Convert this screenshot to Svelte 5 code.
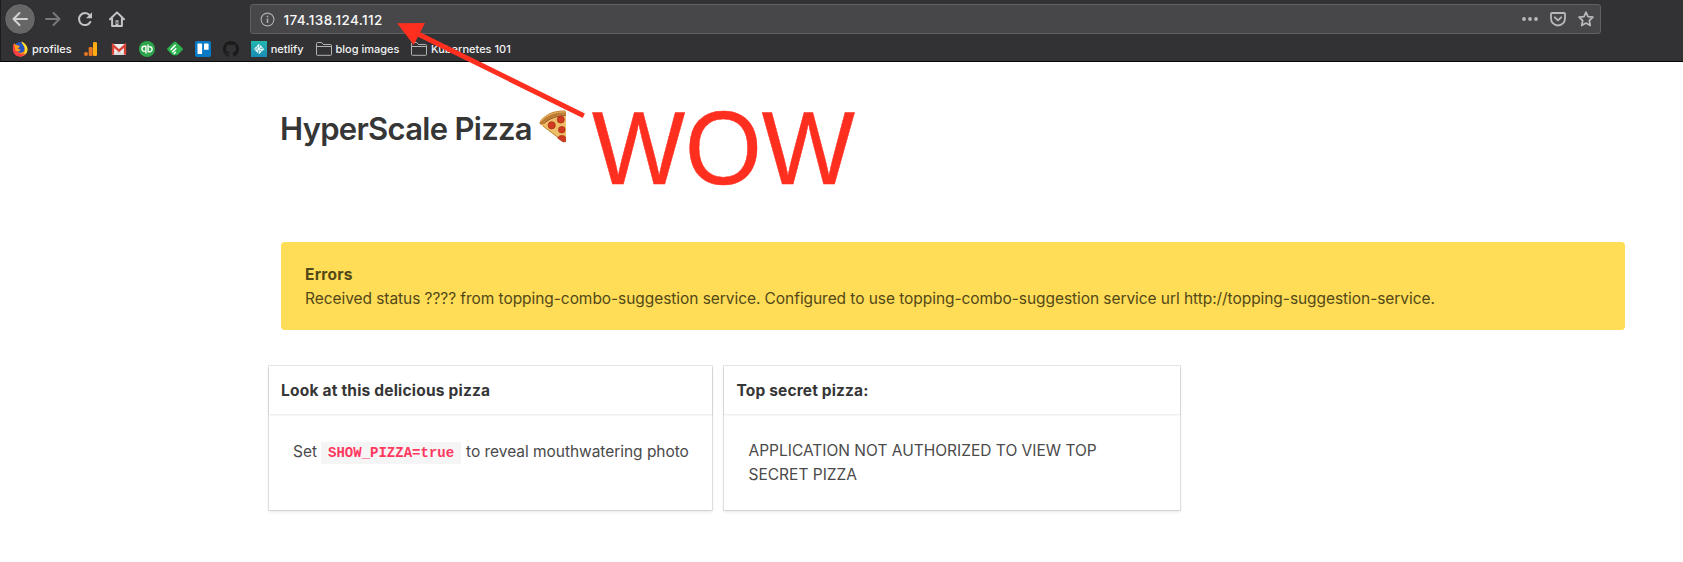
<script>
  const bookmarks = [
    { icon: 'firefox', label: 'profiles', left: 11 },
    { icon: 'analytics', left: 11 },
    { icon: 'gmail', left: 12 },
    { icon: 'quickbooks', left: 12 },
    { icon: 'feedly', left: 12 },
    { icon: 'trello', left: 12 },
    { icon: 'github', left: 12 },
    { icon: 'netlify', label: 'netlify', left: 12 },
    { icon: 'folder', label: 'blog images', left: 12 },
    { icon: 'folder', label: 'Kubernetes 101', left: 11.5 }
  ];
</script>

<div class="page">
  <header class="browser">
    <div class="toolbar">
      <button class="back" aria-label="Back">
        <svg width="16" height="16" viewBox="0 0 16 16" fill="none" stroke="#d2d2d3" stroke-width="2" stroke-linecap="round" stroke-linejoin="round"><path d="M15 8H1.5M7.5 2 1.5 8l6 6" /></svg>
      </button>
      <svg class="forward" width="16" height="16" viewBox="0 0 16 16" fill="none" stroke="#79797a" stroke-width="2" stroke-linecap="round" stroke-linejoin="round"><path d="M1 8h13.5M8.5 2l6 6-6 6" /></svg>
      <svg class="reload" width="16" height="16" viewBox="0 0 16 16" fill="none" stroke="#c4c4c5" stroke-width="2" stroke-linecap="round"><path d="M12.6 4.2A6 6 0 1 0 13.3 11" /><path d="M15 1.2v6H9z" fill="#c4c4c5" stroke="none" /></svg>
      <svg class="home" width="16" height="16" viewBox="0 0 16 16" fill="none" stroke="#c4c4c5" stroke-width="2" stroke-linecap="round" stroke-linejoin="round"><path d="M1 8.2 8 1.4l7 6.8M3.1 7.5V15h9.8V7.5" /><path d="M6.5 15V9.3h3V15z" fill="#c4c4c5" stroke="none" /><path d="M8 11v1.5" stroke="#323234" stroke-width="1" /></svg>
      <div class="urlbar">
        <svg width="15" height="15" viewBox="0 0 15 15" fill="none" stroke="#b0b0b1"><circle cx="7.5" cy="7.5" r="6.4" stroke-width="1.1" /><path d="M7.5 6.6v4.3" stroke-width="1.6" /><circle cx="7.5" cy="4.4" r=".9" fill="#b0b0b1" stroke="none" /></svg>
        <span class="address">174.138.124.112</span>
        <svg class="dots" width="16" height="16" viewBox="0 0 16 16" fill="#b9b9ba"><circle cx="2" cy="8" r="1.9" /><circle cx="8" cy="8" r="1.9" /><circle cx="14" cy="8" r="1.9" /></svg>
        <svg class="pocket" width="16" height="16" viewBox="0 0 16 16" fill="none" stroke="#b9b9ba" stroke-width="1.8" stroke-linecap="round" stroke-linejoin="round"><path d="M2 2h12a1 1 0 0 1 1 1v4.5a7 7 0 0 1-14 0V3a1 1 0 0 1 1-1z" /><path d="m4.8 6.3 3.2 3 3.2-3" /></svg>
        <svg width="16" height="16" viewBox="0 0 16 16" fill="none" stroke="#b9b9ba" stroke-width="1.7" stroke-linejoin="round"><path d="m8 1.2 2 4.5 5 .5-3.7 3.3 1 5L8 12l-4.3 2.5 1-5L1 6.2l5-.5z" /></svg>
      </div>
    </div>

    <nav class="bookmarks">
      {#each bookmarks as b}
        <span class="bookmark" style="margin-left:{b.left}px">
          <svg width="16" height="16" viewBox="0 0 16 16">
            {#if b.icon === 'firefox'}
              <circle cx="8.3" cy="8.5" r="7" fill="#ff8a16" />
              <path d="M9.5.6c3 1.5 6.2 4.2 6 8.2-.3 4-3.6 6.7-7.3 6.7 3.6-1.3 5.2-4.200 4.500-7.700C12.300 5.300 10 4 9.500.6z" fill="#ffdb2e" />
              <path d="M1 5.500C.3 10.500 2.500 15.700 8.300 15.500c2.700-.1 4.600-1.400 5.600-3-3 1.600-7.500.9-8.400-2.200L4 5.500 2.200 2.300C1.300 3.400 1.100 4.500 1 5.500z" fill="#ff3b45" />
              <path d="M3.600 3.100C5 1.500 7 1 9.200 1.300c1 2 3.400 3.600 3.400 6.500 0 2.400-1.800 4-4 4-2.100 0-3.200-1.200-3.500-2.600 1.300.6 2.600.3 3.500-.6-1-.6-2.300-.4-2.700-1.400l1.700-1.700-2-.4z" fill="#2353c4" />
              <path d="M1.800 2.500 4 4.200l2.800.2 1 1.400-2.100 1.300.3 1.500 2.500.3-1.600 1.700-3.300-.5z" fill="#ff9c1b" />
            {:else if b.icon === 'analytics'}
              <rect x="10" y="1" width="4" height="14" rx="1.300" fill="#ffad13" /><rect x="5.700" y="6" width="4" height="9" rx="1.300" fill="#e97721" /><circle cx="3" cy="13" r="2" fill="#e97721" />
            {:else if b.icon === 'gmail'}
              <rect x="1" y="3" width="14" height="11" rx=".8" fill="#eee" />
              <path d="m3 14 5-5 5 5z" fill="#d9d9d9" />
              <path d="M2 13.800V4.300l6 5.300 6-5.300v9.500" fill="none" stroke="#da4437" stroke-width="2.300" />
            {:else if b.icon === 'quickbooks'}
              <circle cx="8" cy="8" r="8" fill="#2da54a" />
              <g fill="none" stroke="#fff" stroke-width="1.400"><path d="M6.900 12.500V5.300H5.400a2.500 2.500 0 0 0 0 5h.4M9.100 3.500v7.200h1.500a2.500 2.500 0 0 0 0-5h-.4" /></g>
            {:else if b.icon === 'feedly'}
              <path d="m9 .9 6.500 6.300a1.300 1.300 0 0 1 0 1.800l-5.200 5.300H5.700L.5 9a1.300 1.300 0 0 1 0-1.800L7 .9a1.400 1.400 0 0 1 2 0z" fill="#2bb24c" />
              <path d="M4 8.500 8.100 4.400M5.800 10.700l3-3M7.300 12.500l1.200-1.200" stroke="#fff" stroke-width="1.600" stroke-linecap="round" />
            {:else if b.icon === 'trello'}
              <rect width="16" height="16" rx="1.700" fill="#087bc6" /><rect x="2.500" y="2.500" width="4.600" height="10.500" rx=".6" fill="#fff" /><rect x="9" y="2.500" width="4.600" height="6.300" rx=".6" fill="#fff" />
            {:else if b.icon === 'github'}
              <path fill="#1b1b1c" d="M8 0C3.580 0 0 3.580 0 8c0 3.540 2.290 6.530 5.470 7.590.4.070.550-.170.550-.380 0-.190-.010-.820-.010-1.490-2.010.370-2.530-.490-2.690-.940-.090-.230-.480-.940-.820-1.130-.280-.150-.680-.520-.010-.530.630-.010 1.080.580 1.230.820.720 1.210 1.870.870 2.330.660.070-.520.280-.870.510-1.070-1.780-.200-3.640-.890-3.640-3.950 0-.870.310-1.590.820-2.150-.080-.200-.360-1.020.080-2.120 0 0 .670-.210 2.200.820.640-.180 1.320-.270 2-.270s1.360.090 2 .270c1.530-1.040 2.200-.820 2.200-.820.440 1.100.160 1.920.080 2.120.510.560.820 1.270.820 2.150 0 3.070-1.870 3.750-3.650 3.950.290.250.540.730.540 1.480 0 1.070-.010 1.930-.010 2.200 0 .210.150.460.550.380A8.010 8.010 0 0 0 16 8c0-4.420-3.580-8-8-8z" />
            {:else if b.icon === 'netlify'}
              <defs><linearGradient id="netlify-bg" x2="0" y2="1"><stop stop-color="#24b8ae" /><stop offset="1" stop-color="#188bb5" /></linearGradient></defs>
              <rect width="16" height="16" fill="url(#netlify-bg)" />
              <path d="m8 2.700 5.300 5.300L8 13.300 2.700 8z" fill="#e6f7f8" />
              <path d="m5.300 5.400 5.400 5.200M9 2.800 7.300 13M3 8.300l9.500-1.300" stroke="#26a3b4" stroke-width=".8" /><circle cx="8" cy="7.800" r="1.200" fill="#fff" />
            {:else}
              <path d="M.5 13.500v-11a1 1 0 0 1 1-1h4.200l1.600 2h7.200a1 1 0 0 1 1 1v9a.8.8 0 0 1-.8.800H1.300a.8.800 0 0 1-.8-.8zM.5 5.500h15" fill="none" stroke="#b4b4b5" />
            {/if}
          </svg>
          {#if b.label}<span class="label">{b.label}</span>{/if}
        </span>
      {/each}
    </nav>
  </header>

  <main>
    <h1>
      <span>HyperScale Pizza</span>
      <svg width="28" height="33" viewBox="0 0 28 33" role="img" aria-label="Pizza">
        <path d="M1 12C7 4 16 .8 27 1v31.300L24 32 1 14z" fill="#edbd68" />
        <path d="M.8 12.200C6 4 15 .3 25.500.6 27 .7 27 2 27 4.500 17 5 9 8.500 3.500 14.300 1.500 15-.3 13.700.8 12.200z" fill="#bd7a32" />
        <path d="M1.500 11.500C7 4.500 15.500 1.500 26.500 1.700" fill="none" stroke="#dda955" stroke-width="1.600" />
        <path d="M4.500 14C10 8.500 17.500 5.800 27 5.300" fill="none" stroke="#8f4e20" stroke-width="1" />
        <path d="m4 16 21 16" stroke="#c28b3f" stroke-width="1" />
        <g fill="#d23a20" stroke="#a82a14" stroke-width=".7"><circle cx="12.700" cy="15.300" r="3.600" /><circle cx="21.800" cy="9.600" r="3.500" /><circle cx="22.800" cy="19.700" r="3.300" /><path d="M18.800 28.200c.5-3 5.500-3.400 7.700-1.200v4.500l-2.500.3z" /></g>
      </svg>
    </h1>

    <section class="alert">
      <strong>Errors</strong>
      <p>Received status ???? from topping-combo-suggestion service. Configured to use topping-combo-suggestion service url http://topping-suggestion-service.</p>
    </section>

    <div class="cards">
      <article class="card first">
        <h2>Look at this delicious pizza</h2>
        <p class="setting"><span>Set</span><code>SHOW_PIZZA=true</code><span class="reveal">to reveal mouthwatering photo</span></p>
      </article>
      <article class="card second">
        <h2>Top secret pizza:</h2>
        <p>APPLICATION NOT AUTHORIZED TO VIEW TOP<br />SECRET PIZZA</p>
      </article>
    </div>
  </main>

  <svg class="annotation" width="1683" height="562" viewBox="0 0 1683 562" fill="#ff2f20">
    <path d="M583.800 115.700 416 33" stroke="#ff2f20" stroke-width="5" />
    <path d="m397.200 23.300 27.800-.4-11.300 22z" />
    <text x="592" y="184" font-size="104.500" stroke="#ff2f20" stroke-width=".5" textLength="263" lengthAdjust="spacingAndGlyphs">WOW</text>
  </svg>
</div>

<style>
  :global(body) { margin: 0; background: #fff; }
  .page { position: relative; width: 1683px; height: 562px; overflow: hidden; font-family: Inter, sans-serif; color: #4a4a4a; }
  svg { display: block; flex: none; }
  .browser { box-sizing: border-box; height: 62px; background: #323234; border-bottom: 1px solid #050506; border-left: 1px solid #1c1c1e; display: flex; flex-direction: column; }
  .toolbar { display: flex; align-items: center; height: 38px; padding-left: 3px; }
  .back { display: flex; align-items: center; justify-content: center; box-sizing: border-box; width: 32px; height: 32px; border: 1px solid #252527; border-radius: 50%; background: #666667; padding: 0; outline: 0; }
  .forward { margin-left: 9px; }
  .reload { margin-left: 16px; }
  .home { margin-left: 16px; }
  .urlbar { box-sizing: border-box; display: flex; align-items: center; width: 1351px; height: 30px; margin-left: 125px; padding: 0 6px 0 9px; border: 1px solid #606062; border-radius: 3px; background: #474749; }
  .address { margin-left: 8.500px; font-size: 13.500px; font-weight: 500; letter-spacing: .37px; color: #f9f9fa; line-height: 20px; padding-top: 1px; }
  .dots { margin-left: auto; }
  .pocket { margin: 0 12px; }
  .bookmarks { display: flex; align-items: center; height: 22px; }
  .bookmark { display: flex; align-items: center; }
  .label { margin-left: 4px; font-size: 11px; font-weight: 500; line-height: 16px; color: #f4f4f5; white-space: nowrap; }
  main { padding: 47px 58px 0 281px; }
  h1 { display: flex; margin: 0 0 0 -1px; height: 40px; font-size: 31px; font-weight: 600; line-height: 40px; letter-spacing: -.7px; color: #363636; }
  h1 svg { margin: 1px 0 0 7.500px; }
  .alert { box-sizing: border-box; height: 88px; margin-top: 93px; padding: 21px 24px; border-radius: 4px; background: #ffdd57; color: #534818; font-size: 15.500px; line-height: 24px; }
  .alert strong { display: block; letter-spacing: .25px; }
  .alert p { margin: 0; letter-spacing: -.06px; white-space: nowrap; }
  .cards { display: flex; gap: 12px; margin: 36px 0 0 -12px; }
  .card { box-sizing: border-box; height: 144px; background: #fff; box-shadow: 0 2px 3px rgba(10,10,10,.1), 0 0 0 1px rgba(10,10,10,.1); font-size: 15.500px; line-height: 24px; }
  .first { width: 443px; }
  .second { width: 456px; }
  h2 { margin: 0; padding: 13px 12px 11px; height: 24px; font-size: 15.500px; font-weight: 700; line-height: 24px; letter-spacing: .2px; color: #363636; box-shadow: 0 1px 2px rgba(10,10,10,.1); }
  .card p { margin: 0; padding: 25px 24px 23px; }
  .second h2 { padding-left: 12.500px; letter-spacing: .15px; }
  .second p { padding-left: 24.500px; }
  .setting { display: flex; align-items: center; white-space: nowrap; }
  .reveal { letter-spacing: -.04px; }
  code { margin: 3px 5px 0 4px; padding: 1px 7px 0; height: 21px; background: #f5f5f5; color: #ff3860; font: 700 14px/20px "Liberation Mono", monospace; }
  .annotation { position: absolute; inset: 0; pointer-events: none; }
  .annotation text { font-family: "Liberation Sans", sans-serif; }
</style>
